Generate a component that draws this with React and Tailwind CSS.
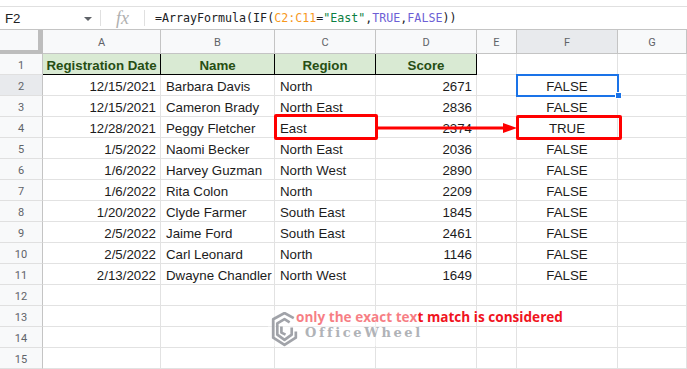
import React from "react";

const cols = [
  { key: "A", w: "w-[118px]" },
  { key: "B", w: "w-[114px]" },
  { key: "C", w: "w-[101px]" },
  { key: "D", w: "w-[101px]" },
  { key: "E", w: "w-[40px]" },
  { key: "F", w: "w-[101px]" },
  { key: "G", w: "flex-1" },
];

const rows = [
  ["12/15/2021", "Barbara Davis", "North", "2671", "FALSE"],
  ["12/15/2021", "Cameron Brady", "North East", "2836", "FALSE"],
  ["12/28/2021", "Peggy Fletcher", "East", "2374", "TRUE"],
  ["1/5/2022", "Naomi Becker", "North East", "2036", "FALSE"],
  ["1/6/2022", "Harvey Guzman", "North West", "2890", "FALSE"],
  ["1/6/2022", "Rita Colon", "North", "2209", "FALSE"],
  ["1/20/2022", "Clyde Farmer", "South East", "1845", "FALSE"],
  ["2/5/2022", "Jaime Ford", "South East", "2461", "FALSE"],
  ["2/5/2022", "Carl Leonard", "North", "1146", "FALSE"],
  ["2/13/2022", "Dwayne Chandler", "North West", "1649", "FALSE"],
];

const sans = "font-['Liberation_Sans',Arial,sans-serif]";

function RowNum({ n, active }) {
  return (
    <div
      className={`w-[43px] shrink-0 h-full flex items-center justify-center pt-[4px] border-r border-r-[#c4c4c4] border-b border-b-[#e0e0e0] text-[11px] text-[#5f6368] font-['Roboto',sans-serif] ${
        active ? "bg-[#e8eaed]" : "bg-[#f8f9fa]"
      }`}
    >
      {n}
    </div>
  );
}

function Cell({ w, align = "left", children, extra = "" }) {
  const a =
    align === "right"
      ? "justify-end pr-[4px]"
      : align === "center"
      ? "justify-center"
      : "justify-start pl-[5px]";
  return (
    <div
      className={`${w} shrink-0 h-full flex items-center pt-[4px] border-r border-b border-[#e2e2e2] whitespace-nowrap overflow-hidden text-[13.3px] text-[#1c1c1c] ${sans} ${a} ${extra}`}
    >
      {children}
    </div>
  );
}

function Logo() {
  return (
    <svg width="27" height="35" viewBox="0 0 26 34" fill="none" stroke="#979aa0" strokeWidth="2.6" strokeLinejoin="round">
      <path d="M22 6 L13 1 L2 7 L2 25 L13 32 L24 25 L24 19" />
      <path d="M18 10 L13 7 L6 11 L6 22 L13 27 L20 22 L20 15" />
      <path d="M10 14 L10 20 L14 22" />
    </svg>
  );
}

export default function App() {
  return (
    <div className="relative w-[687px] h-[369px] overflow-hidden bg-white select-none">
      {/* top strip */}
      <div className="h-[6px] bg-white" />

      {/* formula bar */}
      <div className="h-[24px] flex items-center border-t border-[#e0e0e0] border-b border-b-[#c4c4c4]">
        <div className="w-[100px] h-full flex items-center justify-between pl-[5px] pr-[8px] pt-[1px]">
          <span className={`text-[13.3px] text-[#202124] ${sans}`}>F2</span>
          <span className="w-0 h-0 border-l-[4px] border-r-[4px] border-t-[4px] border-l-transparent border-r-transparent border-t-[#5f6368]" />
        </div>
        <div className="w-px h-[16px] bg-[#e0e0e0]" />
        <div className="w-[43px] flex items-center justify-center">
          <span className="text-[18px] italic text-[#b0b0b0] font-['Liberation_Serif',serif] leading-none">fx</span>
        </div>
        <div className="w-px h-[16px] bg-[#e0e0e0]" />
        <div className="pl-[10px] pt-[1px] text-[11.65px] font-['DejaVu_Sans_Mono',monospace] text-[#202124] whitespace-nowrap">
          =ArrayFormula(IF(
          <span className="text-[#f7981d]">C2:C11</span>=
          <span className="text-[#0b8043]">"East"</span>,
          <span className="text-[#6d5fd5]">TRUE</span>,
          <span className="text-[#6d5fd5]">FALSE</span>))
        </div>
      </div>

      {/* column headers */}
      <div className="h-[24px] flex">
        <div className="w-[43px] shrink-0 h-full bg-[#f8f9fa] border-r-[5px] border-b-[4px] border-[#bdbdbd]" />
        {cols.map((c) => (
          <div
            key={c.key}
            className={`${c.w} shrink-0 h-full flex items-center justify-center pt-[3px] border-r border-b border-[#c4c4c4] text-[11px] text-[#5f6368] font-['Roboto',sans-serif] ${
              c.key === "F" ? "bg-[#e8eaed]" : "bg-[#f8f9fa]"
            }`}
          >
            {c.key}
          </div>
        ))}
      </div>

      {/* row 1 */}
      <div className="h-[21px] flex">
        <RowNum n={1} />
        {["Registration Date", "Name", "Region", "Score"].map((t, i) => (
          <div
            key={t}
            className={`${cols[i].w} shrink-0 h-full flex items-center justify-center pt-[4px] bg-[#d9ead3] border-r border-b border-black text-[13.3px] font-bold text-[#274e13] ${sans}`}
          >
            {t}
          </div>
        ))}
        <Cell w={cols[4].w} />
        <Cell w={cols[5].w} />
        <Cell w={cols[6].w} />
      </div>

      {rows.map((r, i) => (
        <div key={i} className="h-[21px] flex">
          <RowNum n={i + 2} active={i === 0} />
          <Cell w={cols[0].w} align="right">{r[0]}</Cell>
          <Cell w={cols[1].w}>{r[1]}</Cell>
          <Cell w={cols[2].w}>{r[2]}</Cell>
          <Cell w={cols[3].w} align="right">{r[3]}</Cell>
          <Cell w={cols[4].w} />
          <Cell w={cols[5].w} align="center">{r[4]}</Cell>
          <Cell w={cols[6].w} />
        </div>
      ))}

      {[12, 13, 14, 15].map((n) => (
        <div key={n} className="h-[21px] flex">
          <RowNum n={n} />
          {cols.map((c) => (
            <Cell key={c.key} w={c.w} />
          ))}
        </div>
      ))}

      {/* selection F2 */}
      <div className="absolute left-[516px] top-[74px] w-[103px] h-[23px] border-2 border-[#1a73e8] pointer-events-none" />
      <div className="absolute left-[615px] top-[92px] w-[7px] h-[7px] bg-[#1a73e8] border border-white" />

      {/* red highlight boxes and arrow */}
      <div className="absolute left-[274px] top-[114px] w-[104px] h-[26px] border-[3px] border-[#ff0000] rounded-[2px]" />
      <div className="absolute left-[516px] top-[115px] w-[106px] h-[25px] border-[3px] border-[#ff0000] rounded-[2px]" />
      <svg className="absolute left-[377px] top-[120px]" width="140" height="16" viewBox="0 0 140 16">
        <line x1="0" y1="8" x2="128" y2="8" stroke="#ff0000" strokeWidth="3" />
        <path d="M126 3 L140 8 L126 13 Z" fill="#ff0000" />
      </svg>

      {/* annotation */}
      <div className="absolute left-[296px] top-[307px] text-[13.6px] font-bold text-[#f0141e] font-['Open_Sans',sans-serif] whitespace-nowrap">
        only the exact text match is considered
      </div>

      {/* watermark */}
      <div className="absolute left-[268px] top-[310px] w-[150px] h-[36px] bg-white/45" />
      <div className="absolute left-[271px] top-[312px] flex items-center gap-[7px] opacity-90">
        <Logo />
        <span className="text-[13px] font-bold tracking-[2.6px] text-[#a8abb0] font-['DejaVu_Serif',serif] mt-[6px]">
          OfficeWheel
        </span>
      </div>
    </div>
  );
}
